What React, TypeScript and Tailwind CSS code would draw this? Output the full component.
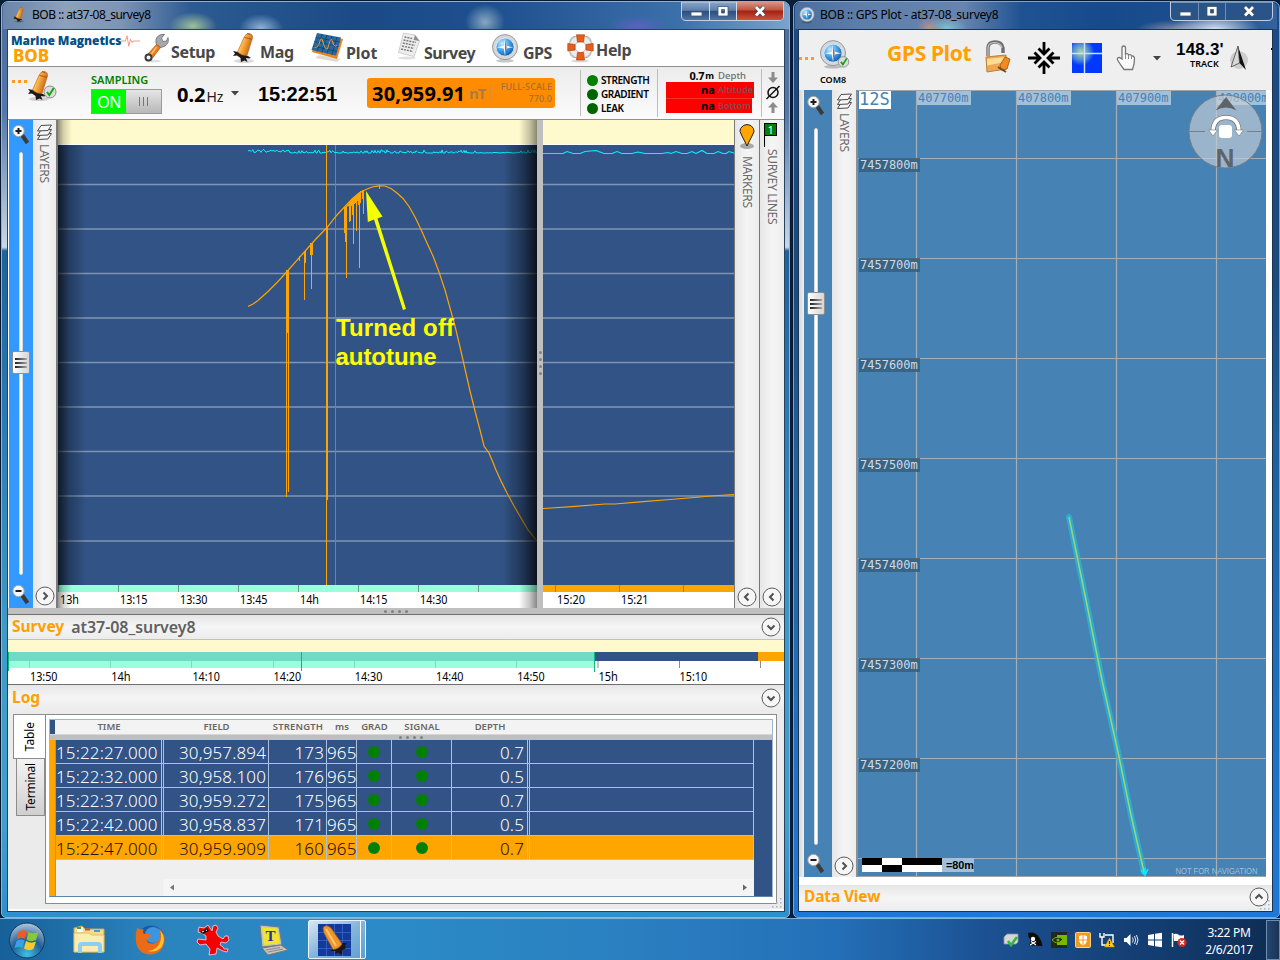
import type { ReactNode } from "react";

const NOTO = '"Noto Sans", sans-serif';
const MONO = '"DejaVu Sans Mono", monospace';

const gridY = [184.5, 229, 273.5, 318, 362.5, 407, 451.5, 496, 541];

const fieldLine =
  "M248 306.500 L253 304 L258 300.500 L263 296 L268 291.500 L273 286.500 L278 281.500 L287 271.500 L303 253.500 L315 240 L327 227.500 L337 215 L345 206.500 L352 199 L359 193 L366 189.500 L372 187 L379 185.800 L385 186 L391 188.500 L397 193 L403 198.500 L409 206.500 L415 217 L421 229.500 L427 243 L433 256 L439 272 L445 290 L450 308 L455 326 L460 347 L465 369 L470 391 L475 411 L480 430 L484 446 L489 453 L492 460 L496 470 L501 481 L507 493 L514 506 L521 518 L528 530 L533 536 L537 541";

function cyanNoise(): string {
  let d = "";
  for (let x = 248; x <= 537; x += 1) {
    const wave = Math.abs(Math.sin(x * 12.9898) * 43758.5453) % 1;
    const base = x < 290 ? 150.5 : 153;
    const amp = x < 290 ? 3 : x > 475 && x < 520 ? 1 : 3.4;
    const y = x < 290 ? base + wave * amp - 1 : base - Math.pow(wave, 3) * amp;
    d += (x === 248 ? "M" : "L") + x + " " + y.toFixed(1) + " ";
  }
  return d;
}

function Label({ x, y, w, children, fill = "#000", size = 12 }: { x: number; y: number; w: number; children: string; fill?: string; size?: number }) {
  return (
    <text x={x} y={y} textLength={w} lengthAdjust="spacingAndGlyphs" fontSize={size} fill={fill} fontFamily={NOTO}>
      {children}
    </text>
  );
}

/* ---------- icons ---------- */

function Bell({ size, check = false }: { size: number; check?: boolean }) {
  return (
    <svg width={size} height={size} viewBox="0 0 32 32" className="shrink-0">
      <defs>
        <linearGradient id="bellBody" x1="0" y1="0" x2="1" y2="0.5">
          <stop offset="0" stopColor="#e98a17" />
          <stop offset="0.4" stopColor="#ffc352" />
          <stop offset="1" stopColor="#c75a09" />
        </linearGradient>
      </defs>
      <ellipse cx="14" cy="29" rx="10" ry="2" fill="#000" opacity="0.15" />
      <path d="M3 19 L8 20 L18 24 L21 26 L18.500 26.500 L16 26 L17.500 30 L14.500 28.500 L11 30 L10.500 26 L7 23.500 L3 24 L5 21.500 Z" fill="#1f1a17" />
      <path d="M7.500 20 L14 5.500 Q15 2 19 1.500 Q23 2 22.500 6 L17 23.500 Q12 24 7.500 20 Z" fill="url(#bellBody)" stroke="#b85c0c" strokeWidth="0.6" />
      <path d="M17 1.500 L20 2.500 M14.500 5.500 Q18 6 22 7.500" stroke="#a44e0a" strokeWidth="0.9" fill="none" />
      {check && <Check cx={25} cy={22} />}
    </svg>
  );
}

function Check({ cx, cy }: { cx: number; cy: number }) {
  return (
    <g>
      <circle cx={cx} cy={cy} r="6" fill="#dcdcdc" stroke="#8d8d8d" />
      <path d={`M${cx - 3} ${cy} l2.300 3 l4.500 -7`} stroke="#11a611" strokeWidth="2" fill="none" />
    </g>
  );
}

function Compass({ size, check = false }: { size: number; check?: boolean }) {
  return (
    <svg width={size} height={size} viewBox="0 0 32 32" className="shrink-0 overflow-visible">
      <defs>
        <radialGradient id="compassFace" cx="0.35" cy="0.3" r="0.8">
          <stop offset="0" stopColor="#c4ecff" />
          <stop offset="0.5" stopColor="#3da0e6" />
          <stop offset="1" stopColor="#0b4ea2" />
        </radialGradient>
      </defs>
      <ellipse cx="16" cy="30.500" rx="10" ry="2" fill="#000" opacity="0.22" />
      <circle cx="16" cy="15" r="14.300" fill="#d5d8da" stroke="#8b8f92" />
      <circle cx="16" cy="15" r="10.300" fill="url(#compassFace)" stroke="#eef5fa" strokeWidth="0.8" />
      <path d="M16 5 L17.500 13.500 L25.500 15 L17.500 16.500 L16 25 L14.500 16.500 L6.500 15 L14.500 13.500 Z" fill="#f3f7fa" />
      <path d="M16 5 L17.800 15 L16 25 Z" fill="#d8592c" />
      {check && <Check cx={28} cy={25} />}
    </svg>
  );
}

function Wrench() {
  return (
    <svg width="26" height="30" viewBox="0 0 26 30" className="shrink-0">
      <ellipse cx="9" cy="28" rx="8" ry="1.500" fill="#000" opacity="0.12" />
      <path d="M12.500 12 Q10.500 5 15 2.500 Q18 0.800 20.500 1.500 L17.500 5 L19 8.500 L22.500 8 L24 4.500 Q25.500 10 21 13 L17 14.500 Z" fill="#a5a9ac" stroke="#686c70" strokeWidth="0.8" />
      <path d="M12.500 11.500 L16.500 14.500 L8.500 25 L4 21 Z" fill="#ee7d16" stroke="#ae4d0c" strokeWidth="0.7" />
      <path d="M12.500 14 L7 21.500" stroke="#ffc073" strokeWidth="1.500" />
      <circle cx="4.500" cy="24.500" r="3" fill="#f4f4f4" stroke="#3c3c3c" strokeWidth="2" />
    </svg>
  );
}

function PlotIcon() {
  return (
    <svg width="34" height="32" viewBox="0 0 34 32" className="shrink-0">
      <path d="M4 26 L26 30 L30 27 L8 23 Z" fill="#000" opacity="0.14" />
      <path d="M6 2 L32 7 L26 27 L1 20 Z" fill="#e98520" />
      <path d="M6 1 L30 5.500 L25 23.500 L0.500 18 Z" fill="#28699f" />
      <path d="M4.800 5.500 L28.800 10 M3.500 9.500 L27.500 14.500 M2 14 L26 19.500 M11 2 L6 19.500 M16 3 L11 20.500 M21 4 L16 21.500 M26 5 L21 22.500" stroke="#153f69" strokeWidth="0.8" />
      <path d="M3.500 15 Q7 17 9 9 Q10.500 4 12 10 Q14 18 16.500 17 L19 9 Q20.500 5 22 11 Q23.500 16 26 13" stroke="#dba34c" strokeWidth="1" fill="none" />
    </svg>
  );
}

function PaperIcon() {
  return (
    <svg width="24" height="28" viewBox="0 0 24 28" className="shrink-0">
      <ellipse cx="9" cy="26" rx="9" ry="1.500" fill="#000" opacity="0.12" />
      <path d="M5.500 1 L17 3 L21.500 9 L16 24.500 L0.500 20.500 Z" fill="#eeeeee" stroke="#c4c4c4" strokeWidth="0.8" />
      <path d="M17 3 L15.500 8 L21.500 9 Z" fill="#8e8e8e" />
      <path d="M6.500 5 L14 6.500 M5.500 8 L18 10.500 M4.800 11 L17 13.500 M4 14 L16 16.500 M3 17 L15 19.500" stroke="#7a7a7a" strokeWidth="1.500" strokeDasharray="2 1" />
    </svg>
  );
}

function LifeRing() {
  return (
    <svg width="27" height="29" viewBox="0 0 27 29" className="shrink-0">
      <ellipse cx="13" cy="27" rx="9" ry="1.500" fill="#000" opacity="0.15" />
      <rect x="3" y="2.500" width="21" height="21" rx="5" fill="none" stroke="#a7a7a7" strokeWidth="1" />
      <circle cx="13.500" cy="13" r="8.700" fill="none" stroke="#ececec" strokeWidth="6" />
      <circle cx="13.500" cy="13" r="11.700" fill="none" stroke="#a2a2a2" strokeWidth="0.7" />
      <circle cx="13.500" cy="13" r="5.500" fill="none" stroke="#a2a2a2" strokeWidth="0.7" />
      <g fill="#e2601c" stroke="#b8430c" strokeWidth="0.7">
        <path d="M9.500 0.800 H17.500 L16.500 8 H10.500 Z" />
        <path d="M9.500 26 H17.500 L16.500 18.500 H10.500 Z" />
        <path d="M0.800 9.500 V17 L8 16 V10.500 Z" />
        <path d="M26.200 9.500 V17 L19 16 V10.500 Z" />
      </g>
    </svg>
  );
}

function Zoomer({ minus = false }: { minus?: boolean }) {
  return (
    <svg width="20" height="22" viewBox="0 0 20 22" className="shrink-0">
      <path d="M11 11 L16.500 19" stroke="#3b3b3b" strokeWidth="4" />
      <circle cx="7.500" cy="7" r="5.700" fill="#f7f7f7" stroke="#9fa3a6" />
      <path d={minus ? "M4.500 7 H10.500" : "M4.500 7 H10.500 M7.500 4 V10"} stroke="#1d1d1d" strokeWidth="2" />
    </svg>
  );
}

function LayersIcon() {
  return (
    <svg width="17" height="17" viewBox="0 0 17 17" className="shrink-0" fill="#f6f6f6" stroke="#4c4c4c" strokeWidth="1">
      <path d="M1.500 15.500 L5 10 L15.500 9.500 L12 15 Z" />
      <path d="M1.500 11.500 L5 6 L15.500 5.500 L12 11 Z" />
      <path d="M1.500 7 L5 1.500 L15.500 1 L12 6.500 Z" />
    </svg>
  );
}

function RoundChevron({ dir }: { dir: "left" | "right" | "up" | "down" }) {
  const d = {
    left: "M11.500 6.500 L8 10 L11.500 13.500",
    right: "M8.500 6.500 L12 10 L8.500 13.500",
    up: "M6.500 11.500 L10 8 L13.500 11.500",
    down: "M6.500 8.500 L10 12 L13.500 8.500",
  }[dir];
  return (
    <svg width="20" height="20" viewBox="0 0 20 20" className="shrink-0">
      <circle cx="10" cy="10" r="9" fill="#f6f6f6" stroke="#5c5c5c" />
      <path d={d} stroke="#505050" strokeWidth="2" fill="none" />
    </svg>
  );
}

/* ---------- window chrome ---------- */

function Caption({ red = false }: { red?: boolean }) {
  return (
    <svg width="104" height="20" viewBox="0 0 104 20" className="shrink-0">
      <defs>
        <linearGradient id="capRed" x1="0" y1="0" x2="0" y2="1">
          <stop offset="0" stopColor="#d99488" />
          <stop offset="0.45" stopColor="#c0523f" />
          <stop offset="0.5" stopColor="#a32013" />
          <stop offset="1" stopColor="#c8553c" />
        </linearGradient>
        <linearGradient id="capBlue" x1="0" y1="0" x2="0" y2="1">
          <stop offset="0" stopColor="#8ca5c4" />
          <stop offset="0.45" stopColor="#607fa8" />
          <stop offset="0.5" stopColor="#2a4f80" />
          <stop offset="1" stopColor="#5177a5" />
        </linearGradient>
      </defs>
      <path d="M0.500 0 V14 Q0.500 18.500 5 18.500 H98 Q102.500 18.500 102.500 14 V0 Z" fill={red ? "url(#capBlue)" : "#295488"} stroke="#c0cfe0" strokeWidth="1" />
      {red && <path d="M56 0 H102 V14 Q102 18 98 18 H56 Z" fill="url(#capRed)" />}
      <path d="M28.500 0 V18 M55.500 0 V18" stroke={red ? "#d2deeb" : "#6f8fb6"} />
      <rect x="10" y="10" width="11" height="4" fill="#fff" stroke="#43556d" strokeWidth="0.8" />
      <path d="M37 4.500 H47 V14 H37 Z M40.500 7.500 V11 H43.500 V7.500 Z" fill="#fff" fillRule="evenodd" stroke="#43556d" strokeWidth="0.8" />
      <path d="M75 5 L83 13.500 M83 5 L75 13.500" stroke="#3d4758" strokeWidth="4.400" />
      <path d="M75 5 L83 13.500 M83 5 L75 13.500" stroke="#fff" strokeWidth="2.800" />
    </svg>
  );
}

function SliderStrip({ thumb, className, trackClass }: { thumb: number; className: string; trackClass: string }) {
  return (
    <div className={"relative flex shrink-0 flex-col items-center " + className}>
      <Zoomer />
      <div className={"w-[4px] flex-1 rounded-sm border border-[#d5d8dc] bg-white " + trackClass} />
      <Zoomer minus />
      <div
        className="absolute left-1/2 flex h-[23px] w-[18px] -translate-x-1/2 flex-col justify-center gap-[2px] rounded-[2px] border border-[#8f8f8f] bg-gradient-to-r from-white to-[#d5d5d5] px-[2px]"
        style={{ top: thumb }}
      >
        <i className="h-[2px] bg-gradient-to-r from-[#222] to-[#aaa]" />
        <i className="h-[2px] bg-gradient-to-r from-[#222] to-[#aaa]" />
        <i className="h-[2px] bg-gradient-to-r from-[#222] to-[#aaa]" />
      </div>
    </div>
  );
}

function SideTab({ icon, label, children, className }: { icon: ReactNode; label: string; children?: ReactNode; className: string }) {
  return (
    <div className={"flex shrink-0 flex-col items-center bg-gradient-to-r from-[#e6e6e6] via-[#f5f5f5] to-[#ececec] " + className}>
      {icon}
      <div className="mr-px whitespace-nowrap text-[12px] leading-[14px] tracking-[-0.35px] text-[#6a6a6a] [writing-mode:vertical-rl]">{label}</div>
      <div className="flex-1" />
      {children}
    </div>
  );
}

/* ---------- main window ---------- */

function MenuItem({ icon, iconClass, label, labelClass }: { icon: ReactNode; iconClass: string; label: string; labelClass: string }) {
  return (
    <>
      <div className={"flex h-[36px] shrink-0 items-center " + iconClass}>{icon}</div>
      <div className={"shrink-0 whitespace-nowrap text-[16px] font-bold text-[#484848] " + labelClass}>{label}</div>
    </>
  );
}

function MenuBar() {
  return (
    <div className="flex h-[36px] shrink-0 bg-white">
      <div className="ml-[3px] w-[133px] shrink-0">
        <div className="flex h-[18px] items-center pt-[3px]">
          <span className="whitespace-nowrap font-['Open_Sans'] text-[12px] font-extrabold leading-[14px] tracking-[-0.05px] text-[#00508a]">Marine Magnetics</span>
          <svg width="19" height="14" viewBox="0 0 22 14" className="shrink-0">
            <path d="M0 7 H5 L7 1 L9 13 L11 5 L13 9 L14 7 H22" fill="none" stroke="#f08a78" />
          </svg>
        </div>
        <div className="pl-[2px] text-[17px] font-extrabold leading-[15px] text-[#ffa000]">BOB</div>
      </div>
      <MenuItem icon={<Wrench />} iconClass="w-[27px]" label="Setup" labelClass="w-[59px] pt-[10px] tracking-[-0.35px]" />
      <MenuItem icon={<Bell size={32} />} iconClass="w-[30px]" label="Mag" labelClass="w-[51px] pt-[10px] tracking-[-0.3px]" />
      <MenuItem icon={<PlotIcon />} iconClass="w-[35px]" label="Plot" labelClass="w-[52px] pt-[11px] tracking-[-0.1px]" />
      <MenuItem icon={<PaperIcon />} iconClass="w-[26px] pb-[4px]" label="Survey" labelClass="w-[67px] pt-[11px] tracking-[-0.45px]" />
      <MenuItem icon={<Compass size={28} />} iconClass="w-[32px]" label="GPS" labelClass="w-[44px] pt-[11px] tracking-[-0.5px]" />
      <MenuItem icon={<LifeRing />} iconClass="w-[29px]" label="Help" labelClass="w-[50px] pt-[8px] tracking-[-0.35px]" />
    </div>
  );
}

function Led({ label, light }: { label: string; light?: boolean }) {
  return (
    <div className="flex h-[14px] items-center gap-[3px]">
      <i className={"size-[11px] rounded-full " + (light ? "bg-[#008000]" : "bg-[#006400]")} />
      <span className="whitespace-nowrap text-[10px] font-semibold tracking-[-0.4px] text-black">{label}</span>
    </div>
  );
}

function StatusBar() {
  return (
    <div className="flex h-[54px] shrink-0 border-y border-[#8f8f8f] bg-gradient-to-b from-[#ececec] to-[#fbfbfb]">
      <div className="flex w-[83px] shrink-0 pl-[4px]">
        <div className="mt-[13px] flex gap-[3px]">
          <i className="size-[3px] bg-[#ff9a1f]" />
          <i className="size-[3px] bg-[#ff9a1f]" />
          <i className="size-[3px] bg-[#ff9a1f]" />
        </div>
        <div className="-ml-[2px] pt-[3px]">
          <Bell size={32} check />
        </div>
      </div>
      <div className="w-[86px] shrink-0">
        <div className="mt-[4px] h-[17px] text-[11px] font-semibold leading-[17px] text-[#008000]">SAMPLING</div>
        <div className="mt-px flex h-[25px] w-[71px] border border-[#9b9b9b]">
          <div className="flex w-[34px] items-center justify-center bg-[#00f800] text-[16px] tracking-[-0.5px] text-white">ON</div>
          <div className="flex flex-1 items-center justify-center gap-[3px] bg-gradient-to-b from-[#e6e6e6] to-[#b8b8b8]">
            <i className="h-[9px] w-px bg-[#777]" />
            <i className="h-[9px] w-px bg-[#777]" />
            <i className="h-[9px] w-px bg-[#777]" />
          </div>
        </div>
      </div>
      <div className="flex w-[81px] shrink-0 items-baseline pt-[14px] leading-[28px]">
        <span className="text-[20px] font-bold text-black">0.2</span>
        <span className="pl-[1px] text-[14px] tracking-[-0.2px] text-[#222]">Hz</span>
        <svg width="8" height="5" viewBox="0 0 8 5" className="ml-[8px] -translate-y-[6px]">
          <path d="M0 0 H8 L4 4.500 Z" fill="#444" />
        </svg>
      </div>
      <div className="w-[109px] shrink-0 pt-[13px] font-['Liberation_Sans'] text-[20px] font-bold leading-[28px] tracking-[-0.1px] text-black">15:22:51</div>
      <div className="mt-[11px] flex h-[30px] w-[188px] shrink-0 items-center rounded-[3px] bg-[#ff8c00] pl-[5px]">
        <span className="w-[97px] pt-px text-[20px] font-bold tracking-[0.2px] text-black">30,959.91</span>
        <span className="w-[22px] border-r border-[#e08a2a] text-[15px] font-bold leading-[16px] tracking-[-1px] text-[#a87c48]">nT</span>
        <div className="flex-1 whitespace-nowrap pr-[3px] text-right text-[9px] font-medium leading-[12px] tracking-[0.1px] text-[#a0703a]">
          <div>FULL-SCALE</div>
          <div>770.0</div>
        </div>
      </div>
      <div className="ml-[25px] mt-[3px] mb-[3px] flex w-[77px] shrink-0 flex-col border-l border-[#bdbdbd] pl-[6px] pt-[3px]">
        <Led label="STRENGTH" light />
        <Led label="GRADIENT" />
        <Led label="LEAK" />
      </div>
      <div className="my-[2px] w-[104px] shrink-0 border-l border-[#bdbdbd] pl-[8px] text-[9.500px] font-medium text-[#6b6b6b]">
        <div className="flex h-[13px] items-center justify-end pr-[15px] leading-[12px]">
          <b className="text-[11px] tracking-[-0.3px] text-black">0.7</b>
          <b className="pr-[4px] pl-px text-[9px] text-black">m</b>
          <span>Depth</span>
        </div>
        <div className="flex h-[16px] w-[88px] items-center bg-[#ff0000] pl-[35px] leading-[16px]">
          <b className="w-[17px] text-[11px] text-black">na</b>
          <span className="text-[9px] font-semibold text-[#8c4848]">Altitude</span>
        </div>
        <div className="flex h-[15px] w-[86px] items-center border-t border-[#e33] bg-[#ff0000] pl-[35px] leading-[14px]">
          <b className="w-[17px] text-[11px] text-black">na</b>
          <span className="text-[9px] font-semibold text-[#8c4848]">Bottom</span>
        </div>
      </div>
      <div className="my-[2px] flex flex-1 flex-col items-center border-l border-[#bdbdbd] pt-px">
        <svg width="16" height="46" viewBox="0 0 16 46">
          <path d="M6.500 2 H9.500 V7.500 H13 L8 13 L3 7.500 H6.500 Z" fill="#8c8c8c" />
          <circle cx="8" cy="22.500" r="5" fill="none" stroke="#111" strokeWidth="1.500" />
          <path d="M1.500 29 L14.500 16" stroke="#111" strokeWidth="1.400" />
          <path d="M8 32 L13 37.500 H9.500 V43 H6.500 V37.500 H3 Z" fill="#8c8c8c" />
        </svg>
      </div>
    </div>
  );
}

function HistoryChart() {
  const hours = ["13h", "13:15", "13:30", "13:45", "14h", "14:15", "14:30"];
  return (
    <svg width="479" height="488" viewBox="58 120 479 488" className="shrink-0">
      <defs>
        <linearGradient id="shadeL" x1="0" x2="1" y1="0" y2="0">
          <stop offset="0" stopColor="#000" stopOpacity="0.7" />
          <stop offset="0.4" stopColor="#000" stopOpacity="0.28" />
          <stop offset="1" stopColor="#000" stopOpacity="0" />
        </linearGradient>
        <linearGradient id="shadeR" x1="1" x2="0" y1="0" y2="0">
          <stop offset="0" stopColor="#000" stopOpacity="0.78" />
          <stop offset="0.4" stopColor="#000" stopOpacity="0.38" />
          <stop offset="1" stopColor="#000" stopOpacity="0" />
        </linearGradient>
      </defs>
      <rect x="58" y="120" width="479" height="25" fill="#fffacd" />
      <rect x="58" y="144" width="479" height="1" fill="#fff" />
      <rect x="58" y="145" width="479" height="440" fill="#315385" />
      {gridY.map((y) => (
        <path key={y} d={`M58 ${y} H537`} stroke="#7f95b4" strokeWidth="1.300" />
      ))}
      <path d="M335.500 145 V585" stroke="#3e8de8" />
      <path d={cyanNoise()} stroke="#00f5ff" strokeWidth="1" fill="none" />
      <path d={fieldLine} stroke="#ffa500" strokeWidth="1.200" fill="none" />
      <g stroke="#ffa500" strokeWidth="1" fill="none">
        <path d="M287.500 270 V333" strokeWidth="3" />
        <path d="M286.500 330 V497 M288.500 330 V492" />
        <path d="M299.500 256 V261 M304.500 251 V300 M305.500 251 V263 M311.500 244 V289" />
        <path d="M311.500 243 V255" strokeWidth="3" />
        <path d="M326.500 145 V585 M327.500 227 V500" />
        <path d="M344.500 207 V233 M345.500 207 V242 M346.500 206 V278 M349.500 202 V222 M350.500 201 V221 M353.500 198 V244 M352.500 199 V215 M356.500 195 V231 M359.500 192 V268 M358.500 194 V205 M363.500 190 V214" />
        <path d="M347 206 L352 200 L358 194 V200 L353 205 Z" fill="#ffa500" />
        <path d="M379.500 185 V189 M360.500 191 V203 M362.500 190 V199" />
      </g>
      <path d="M366 191 L367.800 222 L374 219.500 L403 310 L406 309 L377.500 218.500 L382.500 216.500 Z" fill="#f4ff00" />
      <g fill="#ffff00" fontFamily='"Liberation Sans", sans-serif' fontWeight="700" fontSize="24">
        <text x="336" y="336" textLength="118">Turned off</text>
        <text x="335.500" y="365" textLength="101">autotune</text>
      </g>
      <rect x="58" y="585" width="479" height="7" fill="#99ffdd" />
      <rect x="58" y="592" width="479" height="16" fill="#fff" />
      {[58.5, 118.5, 178.5, 238.5, 298.5, 358.5, 418.5, 478.5].map((x) => (
        <path key={x} d={`M${x} 585 V592`} stroke="#6c9c8c" />
      ))}
      {hours.map((h, i) => (
        <Label key={h} x={60 + i * 60} y={604} w={h.length > 3 ? 27.5 : 19}>
          {h}
        </Label>
      ))}
      <rect x="58" y="145" width="28" height="440" fill="url(#shadeL)" />
      <rect x="58" y="120" width="14" height="25" fill="url(#shadeL)" opacity="0.6" />
      <rect x="58" y="585" width="14" height="23" fill="url(#shadeL)" opacity="0.6" />
      <rect x="503" y="145" width="34" height="440" fill="url(#shadeR)" />
      <rect x="519" y="120" width="18" height="25" fill="url(#shadeR)" opacity="0.6" />
      <rect x="519" y="585" width="18" height="23" fill="url(#shadeR)" opacity="0.6" />
    </svg>
  );
}

function LiveChart() {
  return (
    <svg width="191" height="488" viewBox="543 120 191 488" className="shrink-0">
      <rect x="543" y="120" width="191" height="25" fill="#fffacd" />
      <rect x="543" y="144" width="191" height="1" fill="#fff" />
      <rect x="543" y="145" width="191" height="440" fill="#315385" />
      {gridY.map((y) => (
        <path key={y} d={`M543 ${y} H734`} stroke="#7f95b4" strokeWidth="1.300" />
      ))}
      <path
        d="M543 153.500 H563 L567 151.500 L573 153.500 H580 L585 151.500 L596 150.500 L600 152 L604 153.500 H612 L617 151.500 L622 153.500 H632 L638 152 L645 153.500 H662 L668 152.500 L671 153.500 L676 151.500 L682 153.500 H687 L692 151.500 L696 153.500 L702 150.500 L707 153.500 H714 L718 151.500 L723 153.500 H726 L729 151.500 L734 153"
        stroke="#00f5ff"
        strokeWidth="1.100"
        fill="none"
      />
      <path d="M543 508.500 L551 508 L575 506.300 L605 504 L615 504 L640 501.800 L670 499.500 L700 497 L710 496 L734 494.500" stroke="#ffa500" strokeWidth="1.200" fill="none" />
      <rect x="543" y="585" width="191" height="7" fill="#ffa500" />
      <rect x="543" y="592" width="191" height="16" fill="#fff" />
      <path d="M555.500 585 V592 M619.500 585 V592 M683.500 585 V592" stroke="#9a7d40" />
      <Label x={557} y={604} w={28}>15:20</Label>
      <Label x={621} y={604} w={27.5}>15:21</Label>
    </svg>
  );
}

function Dots({ vertical = false }: { vertical?: boolean }) {
  return (
    <div className={"flex " + (vertical ? "flex-col gap-[4px]" : "gap-[4px]")}>
      {[0, 1, 2, 3].map((i) => (
        <i key={i} className="size-[3px] rounded-full bg-[#828282]" />
      ))}
    </div>
  );
}

function ChartArea() {
  return (
    <div className="flex h-[488px] shrink-0">
      <SliderStrip thumb={231} className="ml-px h-[488px] w-[24px] bg-[#3399ff] pt-[4px] pb-[2px]" trackClass="mt-[6px] mb-[9px]" />
      <SideTab
        icon={
          <div className="pt-[4px] pb-[3px]">
            <LayersIcon />
          </div>
        }
        label="LAYERS"
        className="w-[23px] pb-[2px]"
      >
        <RoundChevron dir="right" />
      </SideTab>
      <div className="w-[2px] shrink-0 bg-[#7b7b7b]" />
      <HistoryChart />
      <div className="flex w-[6px] shrink-0 flex-col items-center bg-[#bfbfbf] pt-[231px]">
        <Dots vertical />
      </div>
      <LiveChart />
      <div className="w-px shrink-0 bg-[#7a7a7a]" />
      <SideTab
        icon={
          <svg width="20" height="36" viewBox="0 0 20 36">
            <ellipse cx="10" cy="26" rx="7" ry="3" fill="#000" opacity="0.3" />
            <path d="M10 26 L4.500 15 Q2 11 3.500 8.500 Q6 4.500 10 4.500 Q14.500 4.500 16.500 8.500 Q18 11.500 15.500 15 Z" fill="#ffa500" stroke="#222" />
          </svg>
        }
        label="MARKERS"
        className="w-[24px] pb-px"
      >
        <RoundChevron dir="left" />
      </SideTab>
      <div className="w-px shrink-0 bg-[#777]" />
      <SideTab
        icon={
          <svg width="20" height="29" viewBox="0 0 20 29">
            <path d="M2.500 3 V27" stroke="#000" />
            <rect x="2.500" y="3.500" width="12" height="12" fill="#008000" stroke="#000" />
            <text x="5.500" y="13.500" fontSize="11" fill="#fff" fontFamily={NOTO}>
              1
            </text>
          </svg>
        }
        label="SURVEY LINES"
        className="w-[24px] pb-px"
      >
        <RoundChevron dir="left" />
      </SideTab>
    </div>
  );
}

function PanelHeader({ title, sub, className }: { title: string; sub?: string; className: string }) {
  return (
    <div className={"flex shrink-0 items-center bg-gradient-to-b from-[#e6e6e6] via-[#f5f5f5] to-[#ececec] pr-[3px] pl-[4px] " + className}>
      <span className="text-[15.500px] font-bold text-[#ffa000]">{title}</span>
      {sub && <span className="pl-[7px] text-[16px] font-semibold tracking-[-0.05px] text-[#606060]">{sub}</span>}
      <span className="flex-1" />
      <RoundChevron dir="down" />
    </div>
  );
}

function SurveyTimeline() {
  const marks = ["13:50", "14h", "14:10", "14:20", "14:30", "14:40", "14:50", "15h", "15:10"];
  return (
    <svg width="776" height="45" viewBox="8 639 776 45" className="shrink-0">
      <rect x="8" y="639" width="776" height="13" fill="#fffacd" />
      <path d="M8 639.500 H784" stroke="#c4c4b6" />
      <rect x="8" y="652" width="776" height="32" fill="#fff" />
      <rect x="8" y="652" width="586" height="9" fill="#70dbc4" />
      <rect x="594" y="652" width="164" height="9" fill="#315385" />
      <rect x="758" y="652" width="26" height="9" fill="#ffa500" />
      <rect x="8" y="661" width="586" height="7" fill="#99ffdd" />
      <path d="M29.500 661 V668 M110.500 661 V668 M191.500 661 V668 M273.500 661 V668 M354.500 661 V668 M435.500 661 V668 M516.500 661 V668" stroke="#7bdcc0" />
      <path d="M598 661 V668 M679.500 661 V668 M760.500 661 V668" stroke="#8a8a8a" />
      <path d="M301.500 652 V671 M594.500 652 V672 M8.500 652 V671" stroke="#10b878" />
      {marks.map((m, i) => (
        <Label key={m} x={30 + i * 81.2} y={681} w={m.length > 3 ? 27.5 : 19.5}>
          {m}
        </Label>
      ))}
    </svg>
  );
}

const cols = "grid grid-cols-[106px_2px_105px_58px_30px_35px_60px_76px_2px_224px]";

const rows = [
  ["15:22:27.000", "30,957.894", "173", "965", "0.7"],
  ["15:22:32.000", "30,958.100", "176", "965", "0.5"],
  ["15:22:37.000", "30,959.272", "175", "965", "0.7"],
  ["15:22:42.000", "30,958.837", "171", "965", "0.5"],
  ["15:22:47.000", "30,959.909", "160", "965", "0.7"],
];

function Cell({ children, className = "" }: { children?: ReactNode; className?: string }) {
  return <div className={"flex items-center overflow-hidden whitespace-nowrap border-r border-b border-[#a9c3de] " + className}>{children}</div>;
}

function LogTable() {
  return (
    <div className="flex h-[178px] w-[724px] flex-col border border-[#9fb6cc] border-b-[#5b86a8] bg-[#efefef]">
      <div className="flex h-[14px] shrink-0 items-center bg-[#f3f3f3]">
        <div className="h-[14px] w-[5px] shrink-0 bg-[#315385]" />
        <div className={cols + " pl-px text-center text-[9.500px] font-semibold leading-[14px] text-[#666]"}>
          <span>TIME</span>
          <span />
          <span>FIELD</span>
          <span className="tracking-[0.15px]">STRENGTH</span>
          <span>ms</span>
          <span className="tracking-[0.1px]">GRAD</span>
          <span className="tracking-[0.1px]">SIGNAL</span>
          <span>DEPTH</span>
          <span />
          <span />
        </div>
      </div>
      <div className="flex h-[6px] shrink-0 items-center justify-center border-t border-[#d6d6d6] bg-[#bfbfbf]">
        <Dots />
      </div>
      <div className="flex min-h-0 flex-1">
        <div className="w-[5px] shrink-0 bg-[#ffa500]" />
        <div className="flex w-[699px] shrink-0 flex-col border-l border-[#7d9cbc]">
          {rows.map((r, i) => (
            <div
              key={r[0]}
              className={
                cols +
                " h-[24px] shrink-0 text-[17px] leading-[22px] font-light tracking-[0.14px] " +
                (i === 4 ? "bg-[#ffa500] text-[#1c1200]" : "bg-[#315385] text-white")
              }
            >
              <Cell className="pt-[3px]">{r[0]}</Cell>
              <Cell />
              <Cell className="justify-end pt-[3px] pr-[2px]">{r[1]}</Cell>
              <Cell className="justify-end pt-[3px] pr-[2px]">{r[2]}</Cell>
              <Cell className="pt-[3px]">{r[3]}</Cell>
              <Cell className="justify-center">
                <i className="size-[12px] rounded-full bg-[#008000]" />
              </Cell>
              <Cell className="justify-center">
                <i className="size-[12px] rounded-full bg-[#008000]" />
              </Cell>
              <Cell className="justify-end pt-[3px] pr-[3px]">{r[4]}</Cell>
              <Cell />
              <Cell />
            </div>
          ))}
          <div className="flex-1" />
          <div className="ml-[107px] flex h-[17px] shrink-0 items-center justify-between bg-[#f4f4f4] pr-[6px] pl-[6px]">
            <svg width="6" height="7" viewBox="0 0 6 7">
              <path d="M5 0.500 V6.500 L1 3.500 Z" fill="#777" />
            </svg>
            <svg width="6" height="7" viewBox="0 0 6 7">
              <path d="M1 0.500 V6.500 L5 3.500 Z" fill="#666" />
            </svg>
          </div>
        </div>
        <div className="flex-1 bg-[#315385]" />
      </div>
    </div>
  );
}

function ResizeGrip() {
  return (
    <svg width="12" height="12" viewBox="0 0 12 12" className="shrink-0" fill="#a9b4c0">
      <path d="M9 1 h1.500 v1.500 h-1.500 Z M9 5 h1.500 v1.500 h-1.500 Z M5 5 h1.500 v1.500 h-1.500 Z M9 9 h1.500 v1.500 h-1.500 Z M5 9 h1.500 v1.500 h-1.500 Z M1 9 h1.500 v1.500 h-1.500 Z" />
    </svg>
  );
}

function LogPanel() {
  return (
    <div className="relative flex min-h-0 flex-1 flex-col border-t border-[#6f6f6f] bg-[#ebebeb]">
      <PanelHeader title="Log" className="h-[25px]" />
      <div className="mt-[4px] flex h-[190px] shrink-0 pl-[6px]">
        <div className="flex w-[31px] shrink-0 flex-col items-end">
          <div className="flex h-[45px] w-[32px] shrink-0 items-center justify-center border border-r-0 border-[#8c8c8c] bg-white text-[12px]">
            <span className="rotate-180 leading-[14px] tracking-[-0.1px] [writing-mode:vertical-rl]">Table</span>
          </div>
          <div className="flex h-[57px] w-[29px] shrink-0 items-center justify-center border border-t-0 border-[#8c8c8c] bg-gradient-to-b from-[#f2f2f2] via-[#e2e2e2] to-[#cfcfcf] text-[12px]">
            <span className="rotate-180 leading-[14px] tracking-[-0.2px] [writing-mode:vertical-rl]">Terminal</span>
          </div>
        </div>
        <div className="w-[732px] shrink-0 border border-[#8c8c8c] bg-white pt-[4px] pl-[3px]">
          <LogTable />
        </div>
      </div>
      <div className="absolute right-[1px] bottom-0">
        <ResizeGrip />
      </div>
    </div>
  );
}

function MainWindow() {
  return (
    <div className="ml-px flex h-[917px] w-[789px] shrink-0 flex-col rounded-t-[7px] rounded-b-[5px] border border-[#8fb3d8] bg-[linear-gradient(180deg,#4a6c9c_0%,#5478aa_12%,#c9d8e8_26.800%,#1f629a_27.200%,#2a7ab5_45%,#3f9cc8_70%,#3f9fd0_90%,#2f8fce_100%)] px-[5px] pr-[4px] shadow-[0_0_0_1px_#081830]">
      <div className="-mx-[4px] flex h-[27px] shrink-0 rounded-t-[6px] bg-[radial-gradient(ellipse_24px_14px_at_190px_24px,#9fc09c_0%,transparent_100%),radial-gradient(ellipse_22px_14px_at_258px_26px,#8fb2d6_0%,transparent_100%),radial-gradient(ellipse_20px_18px_at_482px_20px,#86a8c0_0%,transparent_100%),radial-gradient(ellipse_30px_10px_at_635px_24px,#5a62c0_0%,transparent_100%),linear-gradient(90deg,#6a86aa_0%,#8ea1bc_8%,#7d94b4_15%,#2c5a92_24%,#1b4a86_45%,#1e4f8f_62%,#3c70aa_86%,#7ba3cb_100%)] pl-[9px]">
        <div className="pt-[5px]">
          <Bell size={16} />
        </div>
        <span className="pt-[4px] pl-[4px] text-[12px] leading-[18px] tracking-[-0.48px] text-black">BOB :: at37-08_survey8</span>
        <span className="flex-1" />
        <Caption red />
        <span className="w-[4px]" />
      </div>
      <div className="flex h-[883px] w-[778px] shrink-0 flex-col border border-[#28435f] bg-white">
        <MenuBar />
        <StatusBar />
        <ChartArea />
        <div className="flex h-[7px] shrink-0 items-center justify-center border-b border-[#6f6f6f] bg-[#bfbfbf]">
          <Dots />
        </div>
        <PanelHeader title="Survey" sub="at37-08_survey8" className="h-[24px]" />
        <SurveyTimeline />
        <LogPanel />
        <div className="h-[2px] shrink-0 bg-white" />
      </div>
    </div>
  );
}

/* ---------- GPS window ---------- */

function GpsToolbar() {
  return (
    <div className="flex h-[60px] shrink-0 overflow-hidden bg-[#efefef]">
      <div className="flex w-[88px] shrink-0 flex-col">
        <div className="flex h-[43px] items-start">
          <div className="mt-[27px] flex w-[20px] shrink-0 gap-[3px]">
            <i className="size-[3px] bg-[#ff9a1f]" />
            <i className="size-[3px] bg-[#ff9a1f]" />
            <i className="size-[3px] bg-[#ff9a1f]" />
          </div>
          <div className="pt-[10px]">
            <Compass size={28} check />
          </div>
        </div>
        <span className="pl-[21px] text-[9px] font-semibold leading-[14px] text-black">COM8</span>
      </div>
      <div className="w-[96px] shrink-0 whitespace-nowrap pt-[8px] text-[21px] font-bold leading-[30px] tracking-[-0.3px] text-[#ffa000]">GPS Plot</div>
      <svg width="30" height="34" viewBox="0 0 30 34" className="mt-[10px] ml-px shrink-0">
        <path d="M4 16 V7 Q5 2 11 2 Q18 2 19 8 V13" fill="none" stroke="#6e6e6e" strokeWidth="3.400" />
        <path d="M4 16 V7 Q5 2.500 11 2.500 Q17 3 18 8" fill="none" stroke="#c6c6c6" strokeWidth="1.200" />
        <path d="M2 17 L22 15 V29 L3 32 Z" fill="#f0a850" stroke="#bd7f36" />
        <path d="M3 19 L21 17 V22 L3 25.500 Z" fill="#ffdc96" />
        <path d="M17 30 L16 25 L21 17 L26 19 L23 29 Z" fill="#f08b20" stroke="#9d500c" strokeWidth="0.8" />
        <path d="M14 27 L22 32" stroke="#6c4a28" strokeWidth="2" />
      </svg>
      <svg width="34" height="34" viewBox="0 0 34 34" className="mt-[11px] ml-[13px] shrink-0">
        <path
          d="M17 1 V12 M11.500 7.500 L17 13 L22.500 7.500 M17 33 V22 M11.500 26.500 L17 21 L22.500 26.500 M1 17 H12 M7.500 11.500 L13 17 L7.500 22.500 M33 17 H22 M26.500 11.500 L21 17 L26.500 22.500"
          fill="none"
          stroke="#000"
          strokeWidth="2.800"
        />
      </svg>
      <svg width="30" height="30" viewBox="0 0 30 30" className="mt-[13px] ml-[11px] shrink-0">
        <defs>
          <radialGradient id="glow" cx="0.3" cy="0.3" r="0.45">
            <stop offset="0" stopColor="#a9d8a0" />
            <stop offset="0.6" stopColor="#4d8ad8" />
            <stop offset="1" stopColor="#0038ff" />
          </radialGradient>
        </defs>
        <rect width="30" height="30" fill="url(#glow)" />
        <path d="M0 10.500 H30 M12.500 0 V30" stroke="#cfe0f4" strokeWidth="1.500" />
      </svg>
      <svg width="20" height="26" viewBox="0 0 20 26" className="mt-[15px] ml-[14px] shrink-0">
        <path
          d="M6 14 V3 Q6 1 7.700 1 Q9.500 1 9.500 3 V9 Q12 8 12.500 10 Q15 9 15.500 11 Q18.500 10.500 18.500 14 Q18.500 19 16.500 24.500 H8 Q4 19 1.500 15 Q0.800 12.500 3.500 12.500 Z"
          fill="#fafafa"
          stroke="#777"
          strokeWidth="1.300"
        />
        <path d="M9.500 9 V14 M12.500 10 V14 M15.500 11 V14" stroke="#888" />
      </svg>
      <svg width="8" height="5" viewBox="0 0 8 5" className="mt-[26px] ml-[17px] shrink-0">
        <path d="M0 0 H8 L4 4.500 Z" fill="#444" />
      </svg>
      <div className="ml-[15px] flex w-[50px] shrink-0 flex-col">
        <span className="mt-[11px] whitespace-nowrap font-['Liberation_Sans'] text-[17px] font-bold leading-[18px] tracking-[0.2px] text-black">148.3'</span>
        <span className="pl-[14px] text-[9px] font-semibold leading-[10px] tracking-[0.1px] text-black">TRACK</span>
      </div>
      <svg width="20" height="30" viewBox="0 0 20 30" className="mt-[14px] ml-[3px] shrink-0">
        <circle cx="10" cy="16" r="9" fill="#cdcdcd" />
        <path d="M9 2 L17 26 L10.500 19 Z" fill="#111" />
        <path d="M9 2 L2 23 L10.500 19 Z" fill="#d8d8d8" stroke="#333" strokeWidth="0.7" />
      </svg>
      <i className="mt-[18px] ml-[22px] size-[2px] bg-black" />
    </div>
  );
}

function GpsMap() {
  return (
    <svg width="408" height="787" viewBox="858 90 408 787" className="shrink-0" fontFamily={MONO}>
      <rect x="858" y="90" width="408" height="787" fill="#4682b4" />
      {[916.5, 1016.5, 1116.5, 1216.5].map((x) => (
        <path key={x} d={`M${x} 91 V877`} stroke="#a5aeb6" strokeWidth="1.200" />
      ))}
      {[158.5, 258.5, 358.5, 458.5, 558.5, 658.5, 758.5, 858.5].map((y) => (
        <path key={y} d={`M858 ${y} H1266`} stroke="#a5aeb6" strokeWidth="1.200" />
      ))}
      <path d="M858 90.500 H1266 M858 876.500 H1266" stroke="#9da5ab" />
      {["407700m", "407800m", "407900m", "408000m"].map((t, i) => (
        <g key={t}>
          <rect x={917 + i * 100} y="91" width="54" height="14" fill="#a3c0d9" />
          <text x={918 + i * 100} y="102" fontSize="12" fill="#4682b4">
            {t}
          </text>
        </g>
      ))}
      <rect x="859" y="91" width="32" height="18" fill="#fff" />
      <text x="859" y="105" fontSize="17" fill="#4682b4">
        12S
      </text>
      {[0, 1, 2, 3, 4, 5, 6].map((i) => (
        <g key={i}>
          <rect x="859" y={158 + i * 100} width="61" height="14" fill="#36617f" opacity="0.9" />
          <text x="860" y={169 + i * 100} fontSize="12" fill="#cfdae4">
            {`7457${800 - i * 100}m`}
          </text>
        </g>
      ))}
      <path d="M1069 517 L1086 600 L1102 680 L1118 752 L1131 815 L1144 872" stroke="#28b4d2" strokeWidth="6" fill="none" opacity="0.85" strokeLinecap="round" />
      <path d="M1069 517 L1086 600 L1102 680 L1118 752 L1131 815 L1144 872" stroke="#a4cf7c" strokeWidth="1.500" fill="none" />
      <path d="M1145 876 V868 M1141 870 L1145 875 L1148 869" stroke="#00f0ff" strokeWidth="1.500" fill="none" />
      <g>
        <circle cx="1225.500" cy="131.500" r="36.500" fill="#c5ced8" fillOpacity="0.66" stroke="#777f88" />
        <path d="M1226 97 L1236.500 110.500 Q1226 104.500 1215.500 110.500 Z" fill="#5f6468" />
        <path d="M1189 131.500 H1205 M1247 131.500 H1262" stroke="#777f88" />
        <path d="M1213 133 Q1213 117.500 1226 117.500 Q1239 117.500 1239 133" fill="none" stroke="#777" strokeWidth="5" />
        <path d="M1213 132 Q1213 117.500 1226 117.500 Q1239 117.500 1239 132" fill="none" stroke="#fff" strokeWidth="3.500" />
        <path d="M1208.500 130 H1217.500 L1213 136 Z M1234.500 130 H1243.500 L1239 136 Z" fill="#fff" stroke="#777" strokeWidth="0.6" />
        <rect x="1219" y="125" width="13" height="13" rx="3" fill="#fff" />
        <text x="1215.500" y="167" fontSize="26" fontWeight="700" fill="#5f6468" fontFamily='"Liberation Sans", sans-serif' textLength="19" lengthAdjust="spacingAndGlyphs">
          N
        </text>
      </g>
      <rect x="862" y="858" width="112" height="14" fill="#a3c0d9" />
      <rect x="862" y="858" width="80" height="14" fill="#fff" />
      <path d="M862 858 H882 V865 H862 Z M882 865 H902 V872 H882 Z M902 858 H942 V865 H902 Z" fill="#000" />
      <text x="946" y="869" fontSize="11" fontWeight="700" textLength="28" lengthAdjust="spacingAndGlyphs" fontFamily='"Liberation Sans", sans-serif'>
        =80m
      </text>
      <text x="1175.500" y="874" fontSize="9" fill="#a4bfd6" textLength="82" lengthAdjust="spacingAndGlyphs" fontFamily='"Liberation Sans", sans-serif'>
        NOT FOR NAVIGATION
      </text>
    </svg>
  );
}

function GpsWindow() {
  return (
    <div className="ml-[3px] flex h-[917px] w-[487px] shrink-0 flex-col rounded-t-[7px] rounded-b-[5px] border border-[#7fa4cf] bg-[linear-gradient(180deg,#1c4a86_0%,#1b4a7c_30%,#20619c_50%,#1f6fb8_75%,#1f78d6_100%)] pr-[5px] pl-[4px] shadow-[0_0_0_1px_#081830]">
      <div className="-mx-[3px] flex h-[27px] shrink-0 rounded-t-[6px] bg-[radial-gradient(ellipse_12px_12px_at_134px_26px,#b58f8c_0%,transparent_100%),radial-gradient(ellipse_20px_12px_at_152px_26px,#7fc0d0_0%,transparent_100%),radial-gradient(ellipse_44px_18px_at_420px_28px,#dfe6ee_0%,transparent_100%),radial-gradient(ellipse_40px_10px_at_380px_28px,#8a8fa0_0%,transparent_100%),linear-gradient(90deg,#4a6e9e_0%,#5f7fab_15%,#6684ae_35%,#1f5293_47%,#174a8c_65%,#1c4e8e_80%,#2a5a96_92%,#33629d_100%)] pl-[2px]">
        <div className="pt-[5px] pl-[2px]">
          <Compass size={16} />
        </div>
        <span className="pt-[4px] pl-[5px] text-[12px] leading-[18px] tracking-[-0.26px] text-black">BOB :: GPS Plot - at37-08_survey8</span>
        <span className="flex-1" />
        <Caption />
        <span className="w-[3px]" />
      </div>
      <div className="flex h-[883px] w-[475px] shrink-0 flex-col border border-[#1d3450] bg-white">
        <GpsToolbar />
        <div className="flex h-[787px] shrink-0">
          <div className="w-[5px] shrink-0 bg-gradient-to-r from-[#d5d5d5] to-[#f0f0f0]" />
          <SliderStrip thumb={202} className="h-[787px] w-[28px] border-r-[4px] border-[#4682b4] bg-[#4682b4] pt-[5px] pb-[2px]" trackClass="mt-[11px] mb-[8px]" />
          <SideTab
            icon={
              <div className="pt-[3px] pb-[3px]">
                <LayersIcon />
              </div>
            }
            label="LAYERS"
            className="w-[24px] pb-px"
          >
            <RoundChevron dir="right" />
          </SideTab>
          <div className="w-[2px] shrink-0 bg-[#8e8e8e]" />
          <GpsMap />
        </div>
        <div className="relative mt-[8px] flex h-[26px] shrink-0 items-center bg-gradient-to-b from-[#e6e6e6] via-[#f5f5f5] to-[#ececec] pr-[3px] pb-[2px] pl-[5px]">
          <span className="text-[15.500px] font-bold tracking-[-0.15px] text-[#ffa000]">Data View</span>
          <span className="flex-1" />
          <div className="absolute right-[1px] bottom-0">
            <ResizeGrip />
          </div>
          <RoundChevron dir="up" />
        </div>
      </div>
    </div>
  );
}

/* ---------- taskbar ---------- */

function Taskbar() {
  return (
    <div className="flex h-[42px] shrink-0 items-center border-t border-[#7fb3dc] bg-[linear-gradient(58deg,transparent_0_1000px,rgba(190,215,240,0)_1000px),linear-gradient(90deg,#17609a_0%,#2a83bd_12%,#2c8bc6_30%,#2a7fc0_50%,#2470b8_65%,#1b4f90_78%,#123a6c_92%,#0f2c52_100%)]">
      <svg width="54" height="40" viewBox="0 0 54 40" className="shrink-0">
        <defs>
          <radialGradient id="orb" cx="0.5" cy="0.9" r="0.9">
            <stop offset="0" stopColor="#3fc0e8" />
            <stop offset="0.5" stopColor="#1f5f96" />
            <stop offset="1" stopColor="#b4c8da" />
          </radialGradient>
        </defs>
        <circle cx="27" cy="20.500" r="17.500" fill="url(#orb)" stroke="#0d3a63" />
        <path d="M18.500 12 Q23 9 27 11.500 L25 19 Q21 17 17 19.500 Z" fill="#ee5a24" />
        <path d="M28.500 12 Q33 14.500 38.500 12 L36 20 Q31 22.500 26.500 19.500 Z" fill="#8cc63f" />
        <path d="M16.500 21 Q21 18.500 24.500 20.500 L22.500 28 Q19 26 14.500 28 Z" fill="#35a3e6" />
        <path d="M26 21 Q31 24 36 21.500 L33.500 29 Q29 31.500 24 28.500 Z" fill="#fdc829" />
      </svg>
      <svg width="34" height="32" viewBox="0 0 34 32" className="ml-[18px] shrink-0">
        <path d="M2 4 L10 2 L13 5 H32 V28 H2 Z" fill="#f4dd8e" stroke="#c9a64a" />
        <path d="M5 3 H11 V8 H5 Z" fill="#fff" />
        <path d="M5 3 H9 V5 H5 Z" fill="#35a853" />
        <path d="M13 4.500 H18 V6.500 H13 Z" fill="#d94a35" />
        <path d="M22 6 H28 V8 H22 Z" fill="#3aa0e0" />
        <path d="M2 9 H17 L20 11 H32 V28 H2 Z" fill="#fbecb0" stroke="#d8b85e" strokeWidth="0.8" />
        <path d="M8 29 V22 Q8 20 10 20 H26 Q28 20 28 22 V29" fill="none" stroke="#8ccff2" strokeWidth="4" />
      </svg>
      <svg width="32" height="32" viewBox="0 0 32 32" className="ml-[28px] shrink-0">
        <circle cx="17" cy="15" r="13.500" fill="#1c58a8" />
        <circle cx="19" cy="11" r="8" fill="#3f95dc" />
        <path d="M3 4 Q7 6 10 5.500 Q8 8 10 10 Q15 9 17 12 Q14 14 12.500 16 Q14 20 19 19.500 Q24 19 26 13 Q27 8 24 4 Q32 10 30.500 18 Q28 30 16 30.500 Q4 30 2 18 Q1 11 3 4 Z" fill="#ec6b17" />
        <path d="M26 6 Q33 15 27.500 23 Q22 29 14 27 Q24 26 26.500 17 Q28 11 26 6 Z" fill="#ffc531" />
      </svg>
      <svg width="34" height="34" viewBox="0 0 34 34" className="ml-[30px] shrink-0">
        <path d="M3 4 L8 5 L12 2 L14 5 L16 8 L17 3 L20 2 L22 5 L20 9 L22 13 L27 16 L29 13 L32 13 L33 17 L30 20 L25 19 L24 22 L27 24 L28 26 L32 26 L31 29 L27 28 L21 25 L20 31 L13 32 L14 26 L10 21 L4 22 L1 19 L2 16 L10 17 L10 13 L6 10 L2 9 Z" fill="#f40000" stroke="#ffd7e6" strokeWidth="0.8" />
        <path d="M4 9 L11 5 L13 8 L7 11 Z" fill="#111" />
        <path d="M6 9 L8 8 M10 7.500 L11 7" stroke="#fff" strokeWidth="1" />
      </svg>
      <svg width="32" height="34" viewBox="0 0 32 34" className="ml-[28px] shrink-0">
        <path d="M2 2 L21 4 L24 22 L4 24 Z" fill="#bfc4bd" stroke="#777" />
        <path d="M4 4 L19.500 5.500 L22 20.500 L6 22 Z" fill="#f2e32d" />
        <path d="M4 25 L23 22 L30 27 L10 32 Z" fill="#c4c4c0" stroke="#77776f" />
        <path d="M8 27 L22 24.500 M10 29 L25 26" stroke="#8a8a86" />
        <text x="7.500" y="18" fontSize="15" fontWeight="700" fill="#2430a8" fontFamily='"Liberation Serif", serif'>
          T
        </text>
      </svg>
      <div className="ml-[18px] flex h-[39px] w-[58px] shrink-0 rounded-[2px] border border-[#e8f4ff] bg-gradient-to-br from-[#d9e8f4] via-[#86b4da] to-[#5aa0d4]">
        <div className="flex w-[52px] items-center justify-center border-r border-white">
          <svg width="33" height="32" viewBox="0 0 33 32">
            <rect width="33" height="32" fill="#123a9a" />
            <path d="M8.500 0 V32 M16.500 0 V32 M24.500 0 V32 M0 8.500 H33 M0 16.500 H33 M0 24.500 H33" stroke="#3c63c4" strokeWidth="0.8" />
            <path d="M12 27 L15 25 L24 19 L29 19 L27 21.500 L28 24 L24.500 26 L24 31 L20 28.500 L17 30 L18 27 Z" fill="#1b1612" />
            <path d="M5 4 Q6 1 10 2 L13 4 L24 20 Q21 25 15 25.500 L6 9 Z" fill="#f0952a" stroke="#a95a10" strokeWidth="0.7" />
            <path d="M8 5 L18 22" stroke="#ffc873" strokeWidth="2" />
          </svg>
        </div>
      </div>
      <div className="flex-1" />
      <div className="flex w-[195px] shrink-0 items-center gap-[8px] pt-px">
        <svg width="16" height="16" viewBox="0 0 16 16">
          <path d="M1 5 L4 2 H15 V10 L13 12 H1 Z" fill="#d4d7da" stroke="#8b9096" strokeWidth="0.8" />
          <path d="M5 9 L8 13 L14 5" fill="none" stroke="#35b83a" strokeWidth="2.600" />
        </svg>
        <svg width="16" height="16" viewBox="0 0 16 16">
          <path d="M1 1 Q8 -1 12 5 Q15 9 15.500 14 Q8 14 2 13 Q4 10 3 7 Q1 5 1 1 Z" fill="#0c0c0c" />
          <circle cx="6" cy="7" r="2.200" fill="#fff" />
          <path d="M3 13 L9 9.500 M4 9.500 L9 13" stroke="#fff" strokeWidth="1.200" />
        </svg>
        <svg width="16" height="16" viewBox="0 0 16 16">
          <rect width="16" height="16" rx="1" fill="#23291f" />
          <path d="M6 3 H16 V13 H6 Z" fill="#77b900" />
          <path d="M1 8 Q6 3 12 7 Q8 12.500 3.500 10 Z" fill="#23291f" stroke="#77b900" strokeWidth="1" />
          <circle cx="7" cy="8" r="1.500" fill="#77b900" />
        </svg>
        <svg width="16" height="16" viewBox="0 0 16 16">
          <rect x="0.500" y="0.500" width="15" height="15" rx="1" fill="#f29a1f" stroke="#ffd28a" />
          <path d="M4 4 L8 3 L12 4 V9 Q11 12 8 13.500 Q5 12 4 9 Z" fill="#fff" />
          <path d="M8 3 V13 M4 8 H12" stroke="#f29a1f" />
        </svg>
        <svg width="16" height="16" viewBox="0 0 16 16">
          <path d="M1 1 V5 H5 V1 M3 5 V13 H8 M6 3 H14 V11" fill="none" stroke="#fff" strokeWidth="1.400" />
          <path d="M10.500 6 L15.500 15 H5.500 Z" fill="#ffcf23" stroke="#b48a00" strokeWidth="0.6" />
          <path d="M10.500 9 V12 M10.500 13 V14" stroke="#222" strokeWidth="1.200" />
        </svg>
        <svg width="16" height="16" viewBox="0 0 16 16">
          <path d="M1 6 H3.500 L7.500 2 V14 L3.500 10 H1 Z" fill="#fff" />
          <path d="M9.500 5.500 Q11 8 9.500 10.500 M11.500 4 Q14 8 11.500 12 M13.500 3 Q16.500 8 13.500 13" stroke="#dce8f4" fill="none" />
        </svg>
        <svg width="16" height="16" viewBox="0 0 16 16" fill="#fff">
          <path d="M1 3 L7 2 V7.500 H1 Z M8 1.800 L15 0.800 V7.500 H8 Z M1 8.500 H7 V14 L1 13 Z M8 8.500 H15 V15.200 L8 14.200 Z" />
        </svg>
        <svg width="16" height="16" viewBox="0 0 16 16">
          <path d="M1.500 1 V15" stroke="#fff" strokeWidth="1.500" />
          <path d="M2.500 2 Q6 1 8 3 Q10 4 13 3 V9 H3 Z" fill="#fff" />
          <circle cx="11" cy="10.500" r="4.500" fill="#d9281e" />
          <path d="M9 8.500 L13 12.500 M13 8.500 L9 12.500" stroke="#fff" strokeWidth="1.400" />
        </svg>
      </div>
      <div className="w-[62px] shrink-0 pt-[2px] text-center text-[12px] leading-[17px] tracking-[-0.3px] text-white">
        <div>3:22 PM</div>
        <div>2/6/2017</div>
      </div>
      <div className="ml-[6px] h-[40px] w-[14px] shrink-0 border border-[#6c8cb0] bg-gradient-to-r from-[#24466f] to-[#1a3358]" />
    </div>
  );
}

export default function App() {
  return (
    <div className="flex h-[960px] w-[1280px] flex-col overflow-hidden bg-[#0a2038] font-['Noto_Sans',sans-serif]">
      <div className="flex h-[918px] shrink-0 pt-px">
        <MainWindow />
        <GpsWindow />
      </div>
      <Taskbar />
    </div>
  );
}
